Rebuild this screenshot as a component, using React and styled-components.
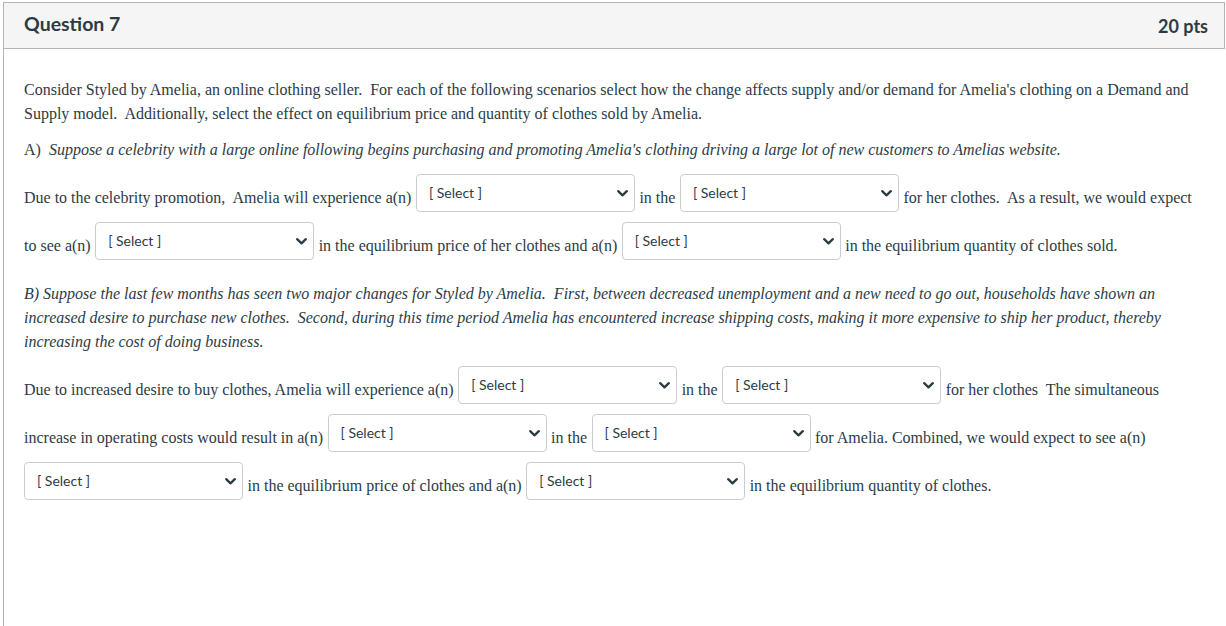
import React from "react";
import styled, { createGlobalStyle } from "styled-components";

const Global = createGlobalStyle`
  html, body { margin: 0; padding: 0; background: #fff; }
  body { font-family: "Liberation Serif", "Times New Roman", serif; color: #2d3b45; }
`;

const Panel = styled.section`
  margin: 2px 0 0 3px;
  border-left: 1px solid #b3b3b3;
  min-height: 624px;
  box-sizing: border-box;
`;

const Header = styled.header`
  display: flex;
  align-items: center;
  justify-content: space-between;
  height: 47px;
  box-sizing: border-box;
  background: #f5f5f5;
  border-top: 1px solid #b3b3b3;
  border-right: 1px solid #b3b3b3;
  border-bottom: 1px solid #b3b3b3;
  margin-right: 1px;
  padding: 0 16px 0 20px;
  font-family: Lato, "Liberation Sans", sans-serif;
  font-weight: 700;
  color: #2d3b45;
`;

const Title = styled.h2`
  margin: 0;
  font-size: 19.5px;
  font-weight: 700;
  padding-bottom: 4px;
`;

const Points = styled.span`
  font-size: 18px;
  padding-top: 1px;
`;

const Body = styled.div`
  padding: 17px 20px;
  font-size: 16px;
  line-height: 24px;
`;

const Para = styled.p`
  margin: 12px 0;
  white-space: pre-wrap;
  font-style: ${(p) => (p.$italic ? "italic" : "normal")};
`;

const Em = styled.em`
  font-style: italic;
`;

const Group = styled.div`
  margin: 12px 0 ${(p) => p.$after || 12}px;
  display: flex;
  flex-direction: column;
  gap: 10px;
`;

const Line = styled.div`
  display: flex;
  align-items: flex-start;
  gap: 4.5px;
`;

const Text = styled.span`
  white-space: pre;
  padding-top: 12px;
`;

const SelectWrap = styled.span`
  position: relative;
  display: inline-block;
  width: 219px;
  height: 38px;
  flex: none;
`;

const NativeSelect = styled.select`
  appearance: none;
  -webkit-appearance: none;
  width: 100%;
  height: 100%;
  box-sizing: border-box;
  border: 1px solid #c7cdd1;
  border-radius: 4px;
  background: #fff;
  padding: 0 30px 2px 12px;
  font-family: Lato, "Liberation Sans", sans-serif;
  font-size: 14px;
  color: #2d3b45;
  outline: none;
`;

const Chevron = styled.svg`
  position: absolute;
  right: 7px;
  top: 16px;
  width: 11px;
  height: 7px;
  pointer-events: none;
`;

function Select() {
  return (
    <SelectWrap>
      <NativeSelect defaultValue="">
        <option value="">[ Select ]</option>
      </NativeSelect>
      <Chevron viewBox="0 0 11 7">
        <path d="M1.2 1.2 L5.5 5.3 L9.8 1.2" fill="none" stroke="#2d3b45" strokeWidth="2.3" strokeLinecap="round" strokeLinejoin="round" />
      </Chevron>
    </SelectWrap>
  );
}

export default function App() {
  return (
    <>
      <Global />
      <Panel>
        <Header>
          <Title>Question 7</Title>
          <Points>20 pts</Points>
        </Header>
        <Body>
          <Para>
            Consider Styled by Amelia, an online clothing seller.  For each of the following scenarios select how the change affects supply and/or demand for Amelia's clothing on a Demand and Supply model.  Additionally, select the effect on equilibrium price and quantity of clothes sold by Amelia.
          </Para>
          <Para>
            A)  <Em>Suppose a celebrity with a large online following begins purchasing and promoting Amelia's clothing driving a large lot of new customers to Amelias website.</Em>
          </Para>
          <Group $after={22}>
            <Line>
              <Text>Due to the celebrity promotion,  Amelia will experience a(n)</Text>
              <Select />
              <Text>in the</Text>
              <Select />
              <Text>for her clothes.  As a result, we would expect</Text>
            </Line>
            <Line>
              <Text>to see a(n)</Text>
              <Select />
              <Text>in the equilibrium price of her clothes and a(n)</Text>
              <Select />
              <Text>in the equilibrium quantity of clothes sold.</Text>
            </Line>
          </Group>
          <Para $italic>
            B) Suppose the last few months has seen two major changes for Styled by Amelia.  First, between decreased unemployment and a new need to go out, households have shown an increased desire to purchase new clothes.  Second, during this time period Amelia has encountered increase shipping costs, making it more expensive to ship her product, thereby increasing the cost of doing business.
          </Para>
          <Group>
            <Line>
              <Text>Due to increased desire to buy clothes, Amelia will experience a(n)</Text>
              <Select />
              <Text>in the</Text>
              <Select />
              <Text>for her clothes  The simultaneous</Text>
            </Line>
            <Line>
              <Text>increase in operating costs would result in a(n)</Text>
              <Select />
              <Text>in the</Text>
              <Select />
              <Text>for Amelia. Combined, we would expect to see a(n)</Text>
            </Line>
            <Line>
              <Select />
              <Text>in the equilibrium price of clothes and a(n)</Text>
              <Select />
              <Text>in the equilibrium quantity of clothes.</Text>
            </Line>
          </Group>
        </Body>
      </Panel>
    </>
  );
}
